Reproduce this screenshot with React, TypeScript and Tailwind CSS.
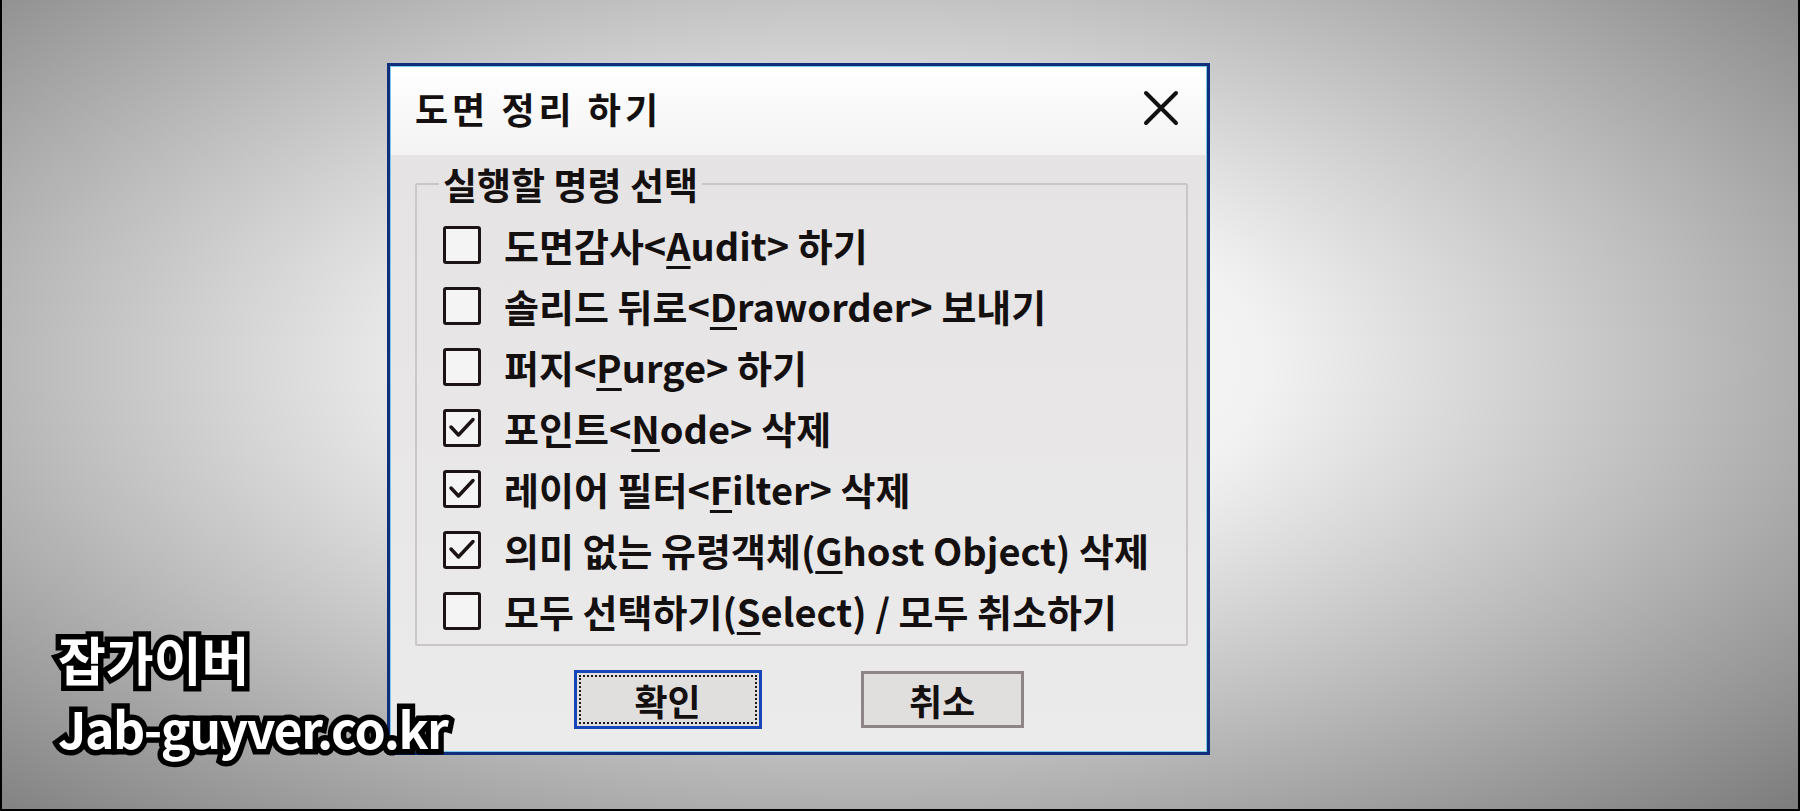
import React from "react"

type Item = {
  before: string
  key: string
  after: string
  checked: boolean
}

const items: Item[] = [
  { before: "도면감사<", key: "A", after: "udit> 하기", checked: false },
  { before: "솔리드 뒤로<", key: "D", after: "raworder> 보내기", checked: false },
  { before: "퍼지<", key: "P", after: "urge> 하기", checked: false },
  { before: "포인트<", key: "N", after: "ode> 삭제", checked: true },
  { before: "레이어 필터<", key: "F", after: "ilter> 삭제", checked: true },
  { before: "의미 없는 유령객체(", key: "G", after: "host Object) 삭제", checked: true },
  { before: "모두 선택하기(", key: "S", after: "elect) / 모두 취소하기", checked: false },
]

const CheckBox = ({ checked }: { checked: boolean }) => (
  <div className="flex h-[38px] w-[38px] shrink-0 items-center justify-center rounded-[3px] border-[3px] border-[#1c1414] bg-[#f5f4f4]">
    {checked && (
      <svg width="30" height="30" viewBox="0 0 30 30" fill="none">
        <path
          d="M4 14 L11.5 22 L26 6.5"
          stroke="#1c1414"
          strokeWidth="3.5"
          strokeLinecap="round"
          strokeLinejoin="round"
        />
      </svg>
    )}
  </div>
)

const Row = ({ item }: { item: Item }) => (
  <div className="flex h-[61px] items-center gap-[23px]">
    <CheckBox checked={item.checked} />
    <span className="whitespace-pre text-[38px] font-bold leading-none text-[#151010]">
      {item.before}
      <span className="underline decoration-[3px] underline-offset-[5px]">{item.key}</span>
      {item.after}
    </span>
  </div>
)

const App = () => {
  return (
    <div className="relative h-[811px] w-[1800px] overflow-hidden border-x-2 border-b-2 border-black bg-[radial-gradient(ellipse_at_48%_45%,#fbfbfb_0%,#f2f2f2_30%,#bdbdbd_62%,#7c7c7c_100%)] font-['Noto_Sans_CJK_KR','Noto_Sans',sans-serif]">
      <div className="pl-[385px] pt-[63px]">
        <div className="w-[823px] h-[692px] border-[3px] border-[#0f2e7c]">
          <div className="flex h-full flex-col border border-[#7cc8ea]">
            {/* title bar */}
            <div className="flex h-[88px] items-center justify-between bg-gradient-to-b from-white to-[#f3f3f3] pb-[6px] pl-[24px] pr-[27px]">
              <span className="text-[36px] font-bold tracking-[4px] text-[#151010]">도면 정리 하기</span>
              <svg width="36" height="36" viewBox="0 0 36 36" fill="none">
                <path d="M3 3 L33 33 M33 3 L3 33" stroke="#111" strokeWidth="4" strokeLinecap="round" />
              </svg>
            </div>

            {/* body */}
            <div className="flex flex-1 flex-col bg-gradient-to-b from-[#e5e3e3] to-[#ecebeb] pl-[24px] pr-[18px] pt-[7px]">
              <fieldset className="rounded-[2px] border-2 border-[#cbc7c7] px-[26px] pb-[3px] pt-[8px]">
                <legend className="-ml-[4px] px-[4px] text-[37px] font-bold leading-[44px] text-[#151010]">
                  실행할 명령 선택
                </legend>
                <div className="flex flex-col">
                  {items.map((it) => (
                    <Row key={it.key} item={it} />
                  ))}
                </div>
              </fieldset>

              <div className="mt-[24px] flex justify-center gap-[99px] pr-[6px]">
                <button className="h-[59px] w-[188px] border-[3px] border-[#1746b8] bg-[#e1dede] p-[2px]">
                  <span className="flex h-full w-full items-center justify-center border-2 border-dotted border-[#1a1a1a] text-[36px] font-bold leading-none text-[#151010]">
                    확인
                  </span>
                </button>
                <button className="mt-[1px] flex h-[57px] w-[163px] items-center justify-center border-[3px] border-[#8e8686] bg-[#e1dede] text-[36px] font-bold leading-none text-[#151010]">
                  취소
                </button>
              </div>
            </div>
          </div>
        </div>
      </div>

      {/* watermark */}
      <div className="absolute left-[56px] top-[626px] flex flex-col font-bold text-white [-webkit-text-stroke:11px_#000] [paint-order:stroke_fill]">
        <span className="text-[52px] leading-[66px]">잡가이버</span>
        <span className="text-[50px] leading-[70px] tracking-[-1.5px]">Jab-guyver.co.kr</span>
      </div>
    </div>
  )
}

export default App
